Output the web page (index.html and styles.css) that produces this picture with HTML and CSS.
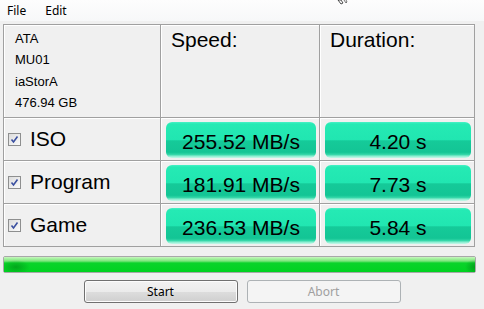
FILE: index.html
```html
<!DOCTYPE html>
<html lang="en">
<head>
    <meta charset="utf-8"/>
    <title>AS SSD Copy Benchmark</title>
    <link rel="stylesheet" href="styles.css">
</head>
<body>
    <div class="window">
        <nav class="menubar">
            <span>File</span>
            <span>Edit</span>
            <svg class="cursor" width="12" height="5" viewBox="0 0 12 5">
                <path d="M2 0 L5 4 L7 3 L5 0 Z" fill="#fff" stroke="#222" stroke-width="0.8"/>
                <path d="M8 0 L10 3 L11 2 L10 0" fill="none" stroke="#555" stroke-width="0.8"/>
            </svg>
        </nav>

        <div class="results">
            <div class="cell drive">
                <div>ATA</div>
                <div>MU01</div>
                <div>iaStorA</div>
                <div>476.94 GB</div>
            </div>
            <div class="cell head">Speed:</div>
            <div class="cell head">Duration:</div>

            <div class="cell label">
                <span class="check"><svg width="9" height="9" viewBox="0 0 9 9"><path d="M1.5 4.5 L3.5 7 L7.5 1.5" fill="none" stroke="#3b50a0" stroke-width="1.6"/></svg></span>
                ISO
            </div>
            <div class="cell value"><div class="pill">255.52 MB/s</div></div>
            <div class="cell value"><div class="pill">4.20 s</div></div>

            <div class="cell label">
                <span class="check"><svg width="9" height="9" viewBox="0 0 9 9"><path d="M1.5 4.5 L3.5 7 L7.5 1.5" fill="none" stroke="#3b50a0" stroke-width="1.6"/></svg></span>
                Program
            </div>
            <div class="cell value"><div class="pill">181.91 MB/s</div></div>
            <div class="cell value"><div class="pill">7.73 s</div></div>

            <div class="cell label">
                <span class="check"><svg width="9" height="9" viewBox="0 0 9 9"><path d="M1.5 4.5 L3.5 7 L7.5 1.5" fill="none" stroke="#3b50a0" stroke-width="1.6"/></svg></span>
                Game
            </div>
            <div class="cell value"><div class="pill">236.53 MB/s</div></div>
            <div class="cell value"><div class="pill">5.84 s</div></div>
        </div>

        <div class="progress"><div class="progress-fill"></div></div>

        <div class="actions">
            <button class="btn">Start</button>
            <button class="btn" disabled>Abort</button>
        </div>
    </div>
</body>
</html>
```
FILE: styles.css
```css
body {
    margin: 0;
    background-color: #f0f0f0;
    font-family: 'Liberation Sans', Arial, sans-serif;
    color: #000;
}

.window {
    width: 484px;
    height: 309px;
    overflow: hidden;
}

.menubar {
    position: relative;
    height: 21px;
    display: flex;
    align-items: center;
    gap: 19px;
    padding-left: 7px;
    font-family: 'Noto Sans', 'Open Sans', sans-serif;
    font-size: 12px;
    background: linear-gradient(#fdfdfd, #f7f8f9);
    margin-bottom: 3px;
}

.cursor {
    position: absolute;
    left: 336px;
    top: 0;
}

.results {
    margin-left: 3px;
    width: 470px;
    display: grid;
    grid-template-columns: 156px 158px 154px;
    grid-template-rows: 92px 42px 42px 42px;
    gap: 1px;
    background-color: #a0a0a0;
    border: 1px solid #a0a0a0;
}

.cell {
    background-color: #f0f0f0;
    box-shadow: inset 1px 1px 0 #fff;
}

.drive {
    padding: 3px 0 0 11px;
    font-size: 13px;
    line-height: 21.3px;
}

.head {
    padding: 3px 0 0 10px;
    font-size: 21px;
    line-height: 24px;
}

.label {
    display: flex;
    align-items: center;
    gap: 9px;
    padding-left: 4px;
    font-size: 21px;
}

.check {
    width: 11px;
    height: 11px;
    border: 1px solid #8e8f8f;
    background: linear-gradient(135deg, #dcdcdc, #fbfbfb);
    display: flex;
    align-items: center;
    justify-content: center;
    margin-top: 1px;
}

.value {
    padding: 4px 3px 2px 5px;
}

.pill {
    height: 36px;
    border-radius: 6px;
    display: flex;
    align-items: center;
    justify-content: center;
    font-size: 21px;
    padding-top: 3px;
    box-sizing: border-box;
    background: linear-gradient(#48f2c6 0, #25eab4 2px, #21e6b1 50%, #15ca99 52%, #13c595 84%, #2fd5a6 90%, #8beed1 95%, #c8f8ea 100%);
}

.progress {
    margin: 9px 0 0 3px;
    width: 471px;
    height: 15px;
    border: 1px solid #a8a8a8;
    border-radius: 2px;
    background-color: #e6e6e6;
}

.progress-fill {
    height: 100%;
    background:
        radial-gradient(ellipse 14px 7px at 12px 10px, rgba(0, 130, 20, 0.55), rgba(0, 130, 20, 0)),
        radial-gradient(ellipse 10px 8px at 100% 10px, rgba(0, 110, 20, 0.5), rgba(0, 110, 20, 0)),
        linear-gradient(#c8f6c0 0, #a0f09a 2px, #7ee67e 4px, #0ad32a 6px, #00d221 100%);
}

.actions {
    display: flex;
    justify-content: center;
    gap: 9px;
    margin-top: 7px;
}

.btn {
    width: 154px;
    height: 23px;
    font-family: 'Noto Sans', 'Open Sans', sans-serif;
    font-size: 12px;
    color: #000;
    border: 1px solid #707070;
    border-radius: 3px;
    background: linear-gradient(#f2f2f2 0, #ebebeb 50%, #dddddd 51%, #cfcfcf 100%);
    box-shadow: inset 0 0 0 1px #fcfcfc;
    padding: 0;
}

.btn:disabled {
    color: #a0a0a0;
    border-color: #adb2b5;
    background: #f4f4f4;
    box-shadow: none;
}
```
